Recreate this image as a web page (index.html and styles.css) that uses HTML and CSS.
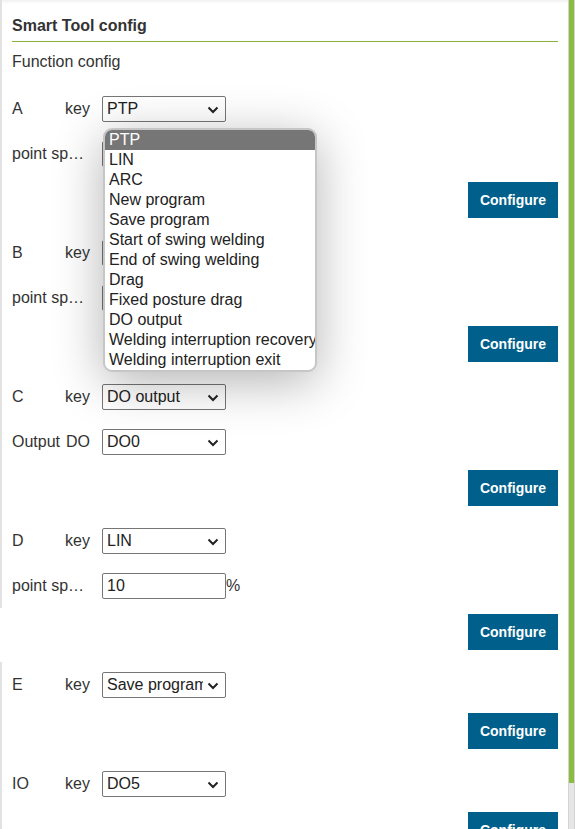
FILE: index.html
```html
<!DOCTYPE html>
<html lang="en">
<head>
<meta charset="utf-8">
<title>Smart Tool config</title>
<link rel="stylesheet" href="styles.css">
</head>
<body>
<div class="page">
  <div class="panel">
    <h2 class="title">Smart Tool config</h2>
    <div class="subtitle">Function config</div>

    <div class="row">
      <div class="label"><span>A</span><span>key</span></div>
      <div class="select"><span class="val">PTP</span><svg class="chev" viewBox="0 0 12 8" width="12" height="8"><path d="M1.5 1.5 L6 6 L10.5 1.5" fill="none" stroke="#222" stroke-width="2"/></svg></div>
    </div>
    <div class="row">
      <div class="label"><span class="ell">point speed</span></div>
      <div class="input">100</div>
    </div>
    <div class="btn-row"><button class="btn">Configure</button></div>

    <div class="row">
      <div class="label"><span>B</span><span>key</span></div>
      <div class="select"><span class="val">ARC</span><svg class="chev" viewBox="0 0 12 8" width="12" height="8"><path d="M1.5 1.5 L6 6 L10.5 1.5" fill="none" stroke="#222" stroke-width="2"/></svg></div>
    </div>
    <div class="row">
      <div class="label"><span class="ell">point speed</span></div>
      <div class="input">100</div>
    </div>
    <div class="btn-row"><button class="btn">Configure</button></div>

    <div class="row">
      <div class="label"><span>C</span><span>key</span></div>
      <div class="select"><span class="val">DO output</span><svg class="chev" viewBox="0 0 12 8" width="12" height="8"><path d="M1.5 1.5 L6 6 L10.5 1.5" fill="none" stroke="#222" stroke-width="2"/></svg></div>
    </div>
    <div class="row">
      <div class="label"><span>Output</span><span>DO</span></div>
      <div class="select"><span class="val">DO0</span><svg class="chev" viewBox="0 0 12 8" width="12" height="8"><path d="M1.5 1.5 L6 6 L10.5 1.5" fill="none" stroke="#222" stroke-width="2"/></svg></div>
    </div>
    <div class="btn-row"><button class="btn">Configure</button></div>

    <div class="row">
      <div class="label"><span>D</span><span>key</span></div>
      <div class="select"><span class="val">LIN</span><svg class="chev" viewBox="0 0 12 8" width="12" height="8"><path d="M1.5 1.5 L6 6 L10.5 1.5" fill="none" stroke="#222" stroke-width="2"/></svg></div>
    </div>
    <div class="row">
      <div class="label"><span class="ell">point speed</span></div>
      <div class="input">10</div><span class="unit">%</span>
    </div>
    <div class="btn-row cut"><button class="btn">Configure</button></div>

    <div class="row">
      <div class="label"><span>E</span><span>key</span></div>
      <div class="select"><span class="val">Save program</span><svg class="chev" viewBox="0 0 12 8" width="12" height="8"><path d="M1.5 1.5 L6 6 L10.5 1.5" fill="none" stroke="#222" stroke-width="2"/></svg></div>
    </div>
    <div class="btn-row"><button class="btn">Configure</button></div>

    <div class="row">
      <div class="label"><span>IO</span><span>key</span></div>
      <div class="select"><span class="val">DO5</span><svg class="chev" viewBox="0 0 12 8" width="12" height="8"><path d="M1.5 1.5 L6 6 L10.5 1.5" fill="none" stroke="#222" stroke-width="2"/></svg></div>
    </div>
    <div class="btn-row"><button class="btn">Configure</button></div>

    <ul class="menu">
      <li class="active">PTP</li>
      <li>LIN</li>
      <li>ARC</li>
      <li>New program</li>
      <li>Save program</li>
      <li>Start of swing welding</li>
      <li>End of swing welding</li>
      <li>Drag</li>
      <li>Fixed posture drag</li>
      <li>DO output</li>
      <li>Welding interruption recovery</li>
      <li>Welding interruption exit</li>
    </ul>
  </div>
  <div class="scrollbar"><div class="thumb"></div></div>
</div>
</body>
</html>
```
FILE: styles.css
```css
html, body {
  margin: 0;
  padding: 0;
  background: #fff;
}

body {
  font-family: "Liberation Sans", Arial, sans-serif;
  font-size: 16px;
  color: #333;
}

.page {
  position: relative;
  height: 829px;
  overflow: hidden;
  box-shadow: inset 0 2px 3px rgba(0, 0, 0, 0.06);
}

.scrollbar {
  position: absolute;
  top: 0;
  right: 0;
  width: 7px;
  height: 829px;
  box-sizing: border-box;
  background: #e6e6e6;
  border-left: 1px solid #d4d4d4;
  border-right: 1px solid #d4d4d4;
}

.thumb {
  height: 783px;
  background: #8bbb3f;
}

.panel {
  position: relative;
  border-left: 2px solid #e2e2e2;
  padding: 1px 17px 17px 10px;
}

.title {
  margin: 0;
  padding: 15px 0 5px;
  font-size: 16px;
  line-height: 20px;
  font-weight: bold;
  color: #333;
  border-bottom: 1px solid #8ab43c;
}

.subtitle {
  margin-top: 10px;
  line-height: 20px;
  margin-bottom: 14px;
}

.row {
  display: flex;
  align-items: center;
  height: 45px;
}

.label {
  width: 78px;
  margin-right: 12px;
  display: flex;
  justify-content: space-between;
  white-space: nowrap;
  line-height: 20px;
}

.ell {
  overflow: hidden;
  text-overflow: ellipsis;
  white-space: nowrap;
  width: 78px;
}

.select, .input {
  box-sizing: border-box;
  width: 124px;
  height: 26px;
  border: 1px solid #767676;
  border-radius: 2px;
  padding: 0 22px 0 4px;
  line-height: 24px;
  position: relative;
  background: #fff;
  color: #222;
}

.select .val {
  display: block;
  overflow: hidden;
  white-space: nowrap;
}

.input {
  padding-right: 4px;
}

.chev {
  position: absolute;
  right: 6px;
  top: 9px;
}

.unit {
  line-height: 20px;
}

.btn-row {
  display: flex;
  justify-content: flex-end;
  padding: 6px 0 12px;
}

.btn-row.cut {
  margin-left: -12px;
  padding-left: 12px;
  background: #fff;
}

.btn {
  width: 90px;
  height: 36px;
  border: 0;
  border-radius: 0;
  background: #005f8b;
  color: #fff;
  font-family: "Liberation Sans", Arial, sans-serif;
  font-size: 14px;
  font-weight: bold;
  padding: 0;
}

.menu {
  position: absolute;
  left: 101px;
  top: 128px;
  width: 214px;
  box-sizing: border-box;
  margin: 0;
  padding: 0;
  list-style: none;
  background: #fff;
  border: 2px solid #c6c6c6;
  border-radius: 9px;
  overflow: hidden;
  box-shadow: 0 10px 50px rgba(0, 0, 0, 0.3);
}

.menu li {
  height: 20px;
  line-height: 20px;
  padding-left: 4px;
  white-space: nowrap;
  color: #222;
}

.menu li.active {
  background: #767676;
  color: #fff;
}
```
